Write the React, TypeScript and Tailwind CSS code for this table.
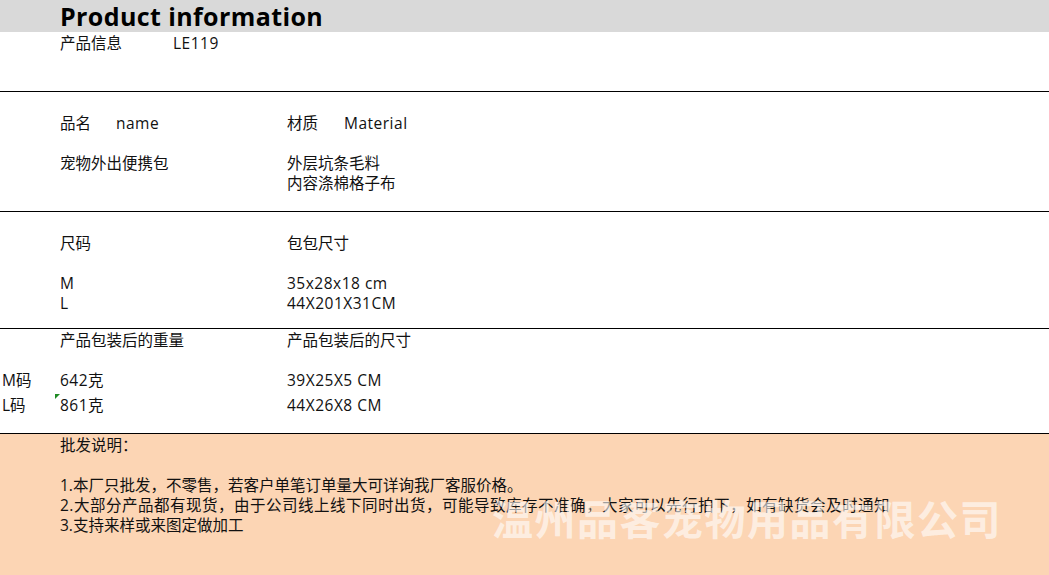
import React from 'react'

const latin = "font-['Open_Sans','Noto_Sans_CJK_SC',sans-serif]"

function Line({ children, className = '' }: { children?: React.ReactNode; className?: string }) {
  return <div className={`h-[20px] leading-[20px] whitespace-nowrap ${className}`}>{children}</div>
}

// latin text in the sheet runs a touch wider than Open Sans
function Lt({ children }: { children: React.ReactNode }) {
  return <span className="tracking-[0.5px]">{children}</span>
}

export default function App() {
  return (
    <div className={`w-[1049px] h-[575px] bg-white text-[15.5px] text-[#111] overflow-hidden ${latin}`}>
      {/* Title band */}
      <div className="h-[32px] bg-[#d9d9d9] pl-[60px]">
        <h1 className="text-[25px] font-bold leading-[32px] text-black tracking-[0.4px]">Product information</h1>
      </div>

      {/* Product code */}
      <div className="h-[60px] border-b border-black pl-[60px] pt-[1px]">
        <Line>
          <span className="inline-block w-[113px]">产品信息</span>
          <Lt>LE119</Lt>
        </Line>
      </div>

      {/* Name / material */}
      <div className="h-[120px] border-b border-black pl-[60px] pt-[21px] grid grid-cols-[227px_1fr]">
        <div>
          <Line>
            <span className="inline-block w-[56px]">品名</span>
            <Lt>name</Lt>
          </Line>
          <Line className="mt-[20px]">宠物外出便携包</Line>
        </div>
        <div>
          <Line>
            <span className="inline-block w-[57px]">材质</span>
            <Lt>Material</Lt>
          </Line>
          <Line className="mt-[20px]">外层坑条毛料</Line>
          <Line>内容涤棉格子布</Line>
        </div>
      </div>

      {/* Sizes */}
      <div className="h-[117px] border-b border-black pl-[60px] pt-[21px] grid grid-cols-[227px_1fr]">
        <div>
          <Line>尺码</Line>
          <Line className="mt-[20px]"><Lt>M</Lt></Line>
          <Line><Lt>L</Lt></Line>
        </div>
        <div>
          <Line>包包尺寸</Line>
          <Line className="mt-[20px]"><Lt>35x28x18 cm</Lt></Line>
          <Line><Lt>44X201X31CM</Lt></Line>
        </div>
      </div>

      {/* Packed weight / size */}
      <div className="relative h-[105px] border-b border-black pt-[1px] grid grid-cols-[58px_227px_1fr] pl-[2px]">
        <div>
          <Line />
          <Line className="mt-[20px] h-[25px]">M码</Line>
          <Line>L码</Line>
        </div>
        <div>
          <Line>产品包装后的重量</Line>
          <Line className="mt-[20px] h-[25px]"><Lt>642</Lt>克</Line>
          <Line><Lt>861</Lt>克</Line>
        </div>
        <div>
          <Line>产品包装后的尺寸</Line>
          <Line className="mt-[20px] h-[25px]"><Lt>39X25X5 CM</Lt></Line>
          <Line><Lt>44X26X8 CM</Lt></Line>
        </div>
        {/* cell comment marker */}
        <div className="absolute left-[55px] top-[65px] w-0 h-0 border-t-[5px] border-t-[#1f8b24] border-r-[5px] border-r-transparent" />
      </div>

      {/* Wholesale notes */}
      <div className="relative h-[142px] bg-[#fcd5b4] pl-[60px] pt-[1px]">
        <Line>批发说明：</Line>
        <Line className="mt-[20px]">1.本厂只批发，不零售，若客户单笔订单量大可详询我厂客服价格。</Line>
        <Line className="tracking-[0.5px]">2.大部分产品都有现货，由于公司线上线下同时出货，可能导致库存不准确，大家可以先行拍下，如有缺货会及时通知</Line>
        <Line>3.支持来样或来图定做加工</Line>
        <div className="absolute left-[492px] top-[61px] text-[41px] leading-[44px] tracking-[1.5px] font-bold text-white/60 whitespace-nowrap font-['Noto_Sans_CJK_SC',sans-serif]">
          温州品客宠物用品有限公司
        </div>
      </div>
    </div>
  )
}
